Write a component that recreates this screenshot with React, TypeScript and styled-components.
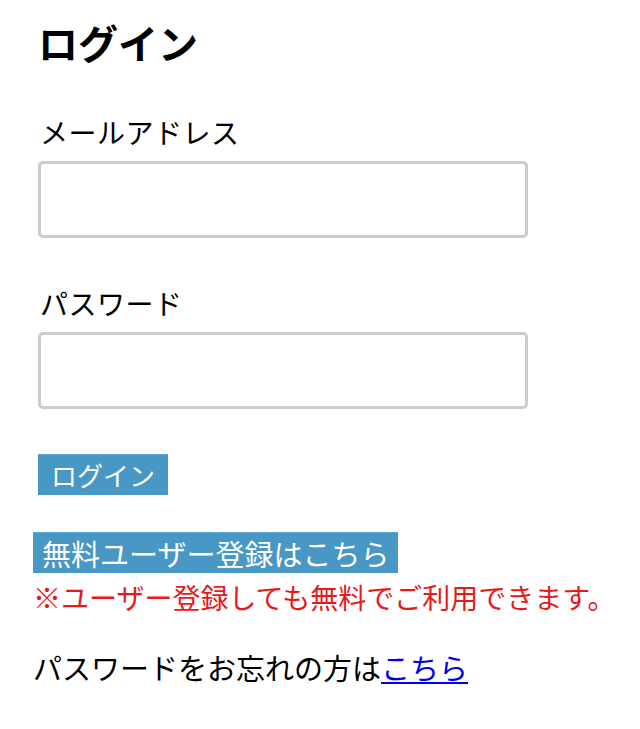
import React from "react";
import styled, { createGlobalStyle } from "styled-components";

const GlobalStyle = createGlobalStyle`
  html, body { margin: 0; padding: 0; background: #ffffff; }
  body { font-family: "Noto Sans CJK JP", "Noto Sans", sans-serif; color: #000; }
`;

const Page = styled.div`
  width: 640px;
  min-height: 729px;
  box-sizing: border-box;
  padding: 14px 0 0 33px;
`;

const Form = styled.form`
  display: flex;
  flex-direction: column;
  padding-left: 5px;
`;

const Title = styled.h1`
  margin: 0 0 42px;
  font-size: 40px;
  line-height: 56px;
  font-weight: 700;
`;

const Field = styled.div<{ $mb: number }>`
  display: flex;
  flex-direction: column;
  gap: 9px;
  margin-bottom: ${(p) => p.$mb}px;
`;

const Label = styled.label`
  font-size: 28px;
  line-height: 40px;
  padding-left: 2px;
  letter-spacing: 0.5px;
`;

const Input = styled.input`
  width: 490px;
  height: 77px;
  box-sizing: border-box;
  border: 3px solid #cccccc;
  border-radius: 5px;
  background: #fff;
  outline: none;
`;

const BlueButton = styled.button<{ $pad: number; $size: number }>`
  align-self: flex-start;
  box-sizing: border-box;
  height: 41px;
  padding: 0 ${(p) => p.$pad}px;
  border: none;
  border-top: 1px solid #5aa9d6;
  background: #4897c4;
  color: #fff;
  font-family: "Noto Sans CJK JP", sans-serif;
  font-size: ${(p) => p.$size}px;
  line-height: 40px;
  cursor: pointer;
`;

const Bottom = styled.div`
  display: flex;
  flex-direction: column;
  margin-top: 37px;
`;

const Note = styled.p`
  margin: 4px 0 0;
  color: #e8191b;
  font-size: 28px;
  line-height: 40px;
`;

const Forgot = styled.p`
  margin: 30px 0 0;
  font-size: 29px;
  line-height: 40px;
`;

const Link = styled.a`
  color: #0000ee;
  text-decoration: underline;
`;

export default function App() {
  return (
    <>
      <GlobalStyle />
      <Page>
        <Form onSubmit={(e) => e.preventDefault()}>
          <Title>ログイン</Title>
          <Field $mb={45}>
            <Label htmlFor="email">メールアドレス</Label>
            <Input id="email" type="email" />
          </Field>
          <Field $mb={45}>
            <Label htmlFor="password">パスワード</Label>
            <Input id="password" type="password" />
          </Field>
          <BlueButton type="submit" $pad={13} $size={26}>ログイン</BlueButton>
        </Form>
        <Bottom>
          <BlueButton type="button" $pad={9} $size={29}>無料ユーザー登録はこちら</BlueButton>
          <Note>※ユーザー登録しても無料でご利用できます。</Note>
          <Forgot>
            パスワードをお忘れの方は<Link href="#">こちら</Link>
          </Forgot>
        </Bottom>
      </Page>
    </>
  );
}
